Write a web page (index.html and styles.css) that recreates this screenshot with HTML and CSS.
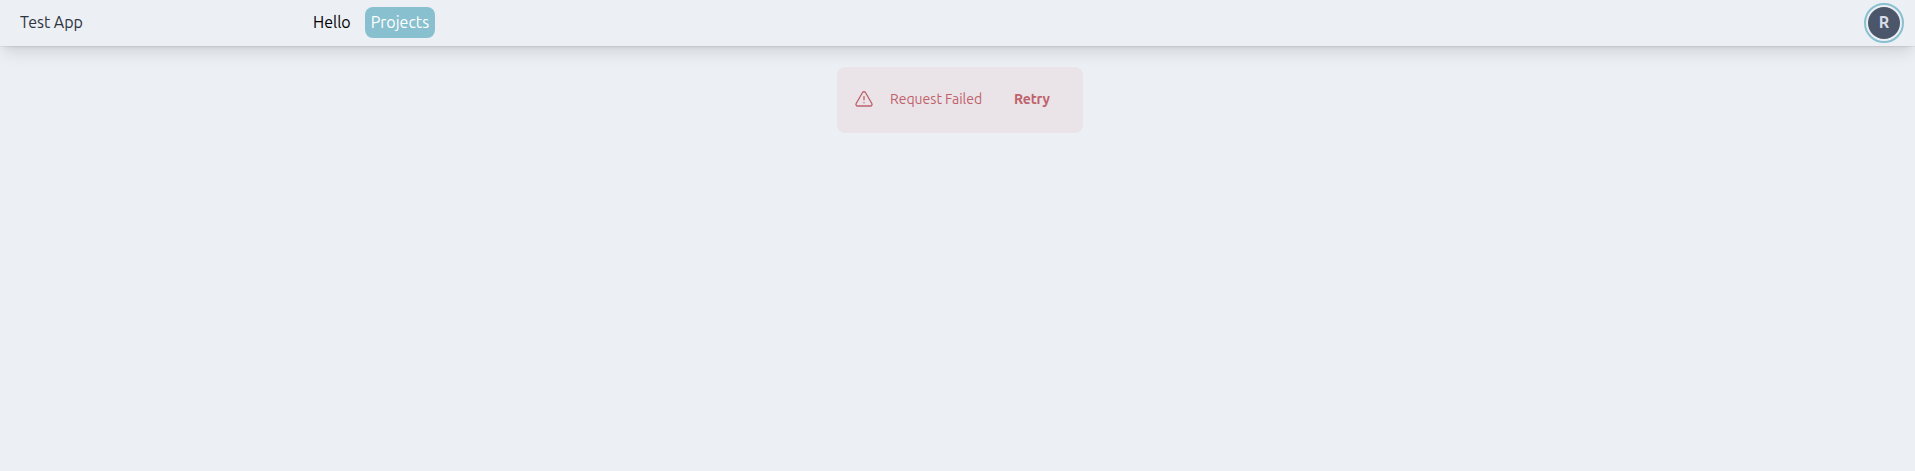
FILE: index.html
```html
<!DOCTYPE html>
<html lang="en">
<head>
<meta charset="utf-8">
<title>Test App</title>
<link rel="stylesheet" href="styles.css">
</head>
<body>
<header class="navbar">
  <div class="brand"><span class="brand-text">Test App</span></div>
  <nav class="nav">
    <a class="nav-link">Hello</a>
    <a class="nav-link active">Projects</a>
  </nav>
  <div class="avatar">R</div>
</header>
<main class="content">
  <div class="alert">
    <svg class="alert-icon" viewBox="0 0 24 24" fill="none" stroke="currentColor" stroke-width="1.6" stroke-linecap="round" stroke-linejoin="round"><path d="M12 9v4m0 3.5h.01M10.3 4.2 2.6 17.4A2 2 0 0 0 4.3 20.4h15.4a2 2 0 0 0 1.7-3L13.7 4.2a2 2 0 0 0-3.4 0z"/></svg>
    <span class="message">Request Failed</span>
    <button class="retry">Retry</button>
  </div>
</main>
</body>
</html>
```
FILE: styles.css
```css
* { box-sizing: border-box; }
body {
  margin: 0;
  min-height: 100vh;
  background: #eceff4;
  color: #2e3440;
  font: 16px/24px Ubuntu, "Noto Sans", sans-serif;
}
.navbar {
  display: flex;
  align-items: center;
  height: 46px;
  padding: 0 11px 0 20px;
  background: #eceff4;
  box-shadow: 0 10px 15px -3px rgba(0, 0, 0, .1), 0 4px 6px -4px rgba(0, 0, 0, .1), 0 0 1px rgba(0, 0, 0, .25);
}
.brand { width: 287px; padding-bottom: 2px; }
.nav { display: flex; flex: 1; gap: 8px; padding-bottom: 1px; }
.nav-link {
  height: 31px;
  padding: 3px 6px;
  border-radius: 8px;
  color: #000;
  white-space: nowrap;
}
.nav-link.active { width: 70px; background: #88c0d0; color: #fff; }
.avatar {
  width: 40px;
  height: 40px;
  border: 2px solid #88c0d0;
  border-radius: 50%;
  padding: 2px;
  background: #4c566a content-box;
  color: #d8dee9;
  font-weight: 600;
  line-height: 31px;
  text-align: center;
}
.content { display: flex; justify-content: center; padding: 21px 0 0 5px; }
.alert {
  display: flex;
  align-items: center;
  width: 246px;
  height: 66px;
  padding: 0 0 2px 17px;
  border-radius: 8px;
  background: #eae4e9;
  color: #bf616a;
  font-size: 14px;
}
.alert-icon { width: 20px; height: 20px; }
.message { width: 124px; margin-left: 16px; }
.retry { padding: 0; border: 0; background: none; color: inherit; font: inherit; font-weight: 600; letter-spacing: -.15px; }
```
